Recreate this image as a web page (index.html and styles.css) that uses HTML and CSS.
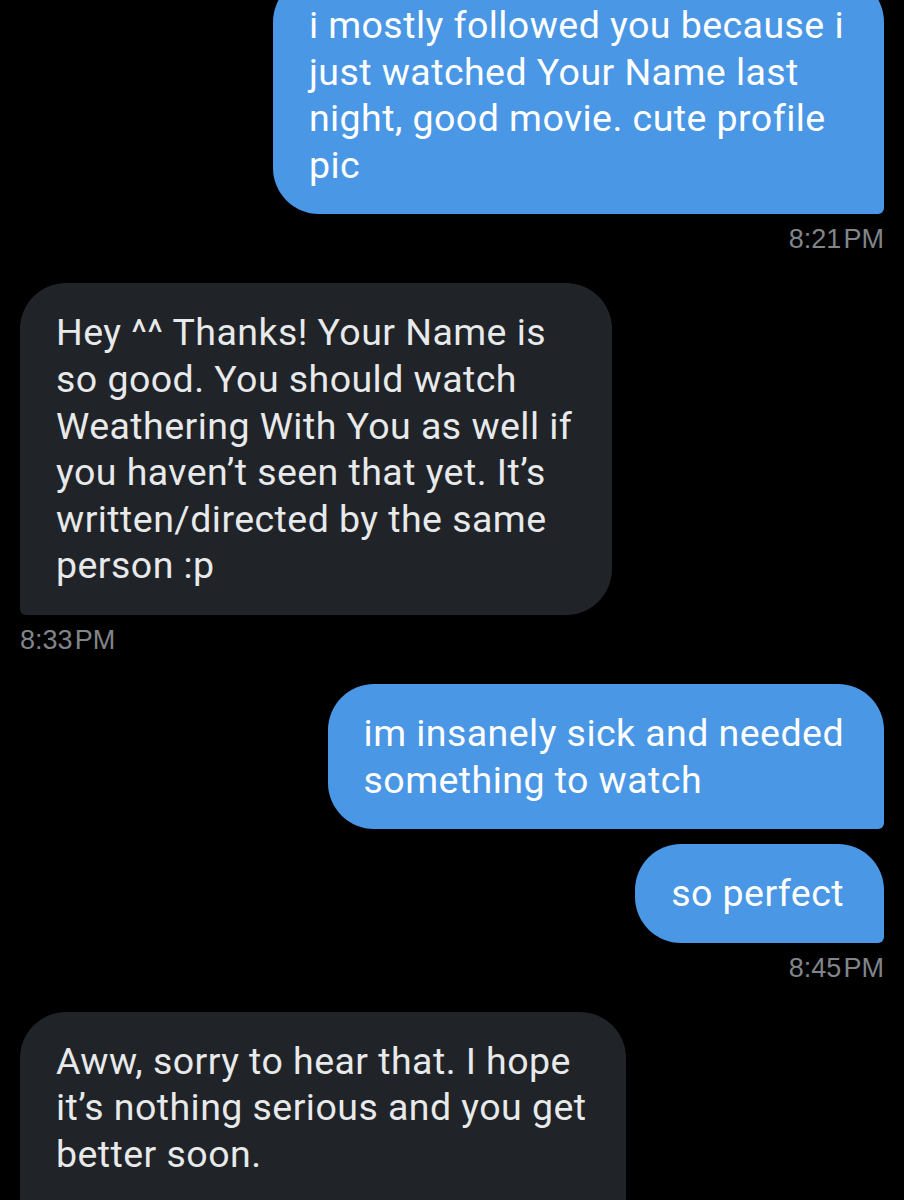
FILE: index.html
```html
<!DOCTYPE html>
<html lang="en">
<head>
    <meta charset="UTF-8">
    <meta name="viewport" content="width=device-width, initial-scale=1.0">
    <title>Messages</title>
    <link rel="stylesheet" href="styles.css">
</head>
<body>
    <div class="chat">
        <div class="msg sent">
            i mostly followed you because i<br>
            just watched Your Name last<br>
            night, good movie. cute profile<br>
            pic
        </div>
        <div class="time right">8:21&#8202;PM</div>

        <div class="msg received">
            Hey ^^ Thanks! Your Name is<br>
            so good. You should watch<br>
            Weathering With You as well if<br>
            you haven’t seen that yet. It’s<br>
            written/directed by the same<br>
            person :p
        </div>
        <div class="time left">8:33&#8202;PM</div>

        <div class="msg sent">
            im insanely sick and needed<br>
            something to watch
        </div>
        <div class="msg sent stacked">
            so perfect
        </div>
        <div class="time right">8:45&#8202;PM</div>

        <div class="msg received">
            Aww, sorry to hear that. I hope<br>
            it’s nothing serious and you get<br>
            better soon.<br>
            &nbsp;
        </div>
    </div>
</body>
</html>
```

FILE: styles.css
```css
body {
    margin: 0;
    background: #000;
    font-family: Roboto, "Liberation Sans", sans-serif;
    overflow: hidden;
}

.chat {
    display: flex;
    flex-direction: column;
    padding: 0 20px;
    margin-top: -24px;
}

.msg {
    font-size: 37.5px;
    line-height: 46.6px;
    letter-spacing: 0.45px;
    padding: 26px 40px 26px 36px;
    border-radius: 46px;
    white-space: nowrap;
    width: fit-content;
}

.sent {
    align-self: flex-end;
    background: #4a97e6;
    color: #fff;
    border-bottom-right-radius: 6px;
}

.received {
    align-self: flex-start;
    background: #202327;
    color: #e7e9ea;
    border-bottom-left-radius: 6px;
}

.stacked {
    margin-top: 15px;
}

.time {
    font-family: "Liberation Sans", Arial, sans-serif;
    font-size: 27px;
    line-height: 30px;
    color: #80858a;
    margin: 10px 0 29px;
}

.time.right {
    align-self: flex-end;
}

.time.left {
    align-self: flex-start;
}
```
